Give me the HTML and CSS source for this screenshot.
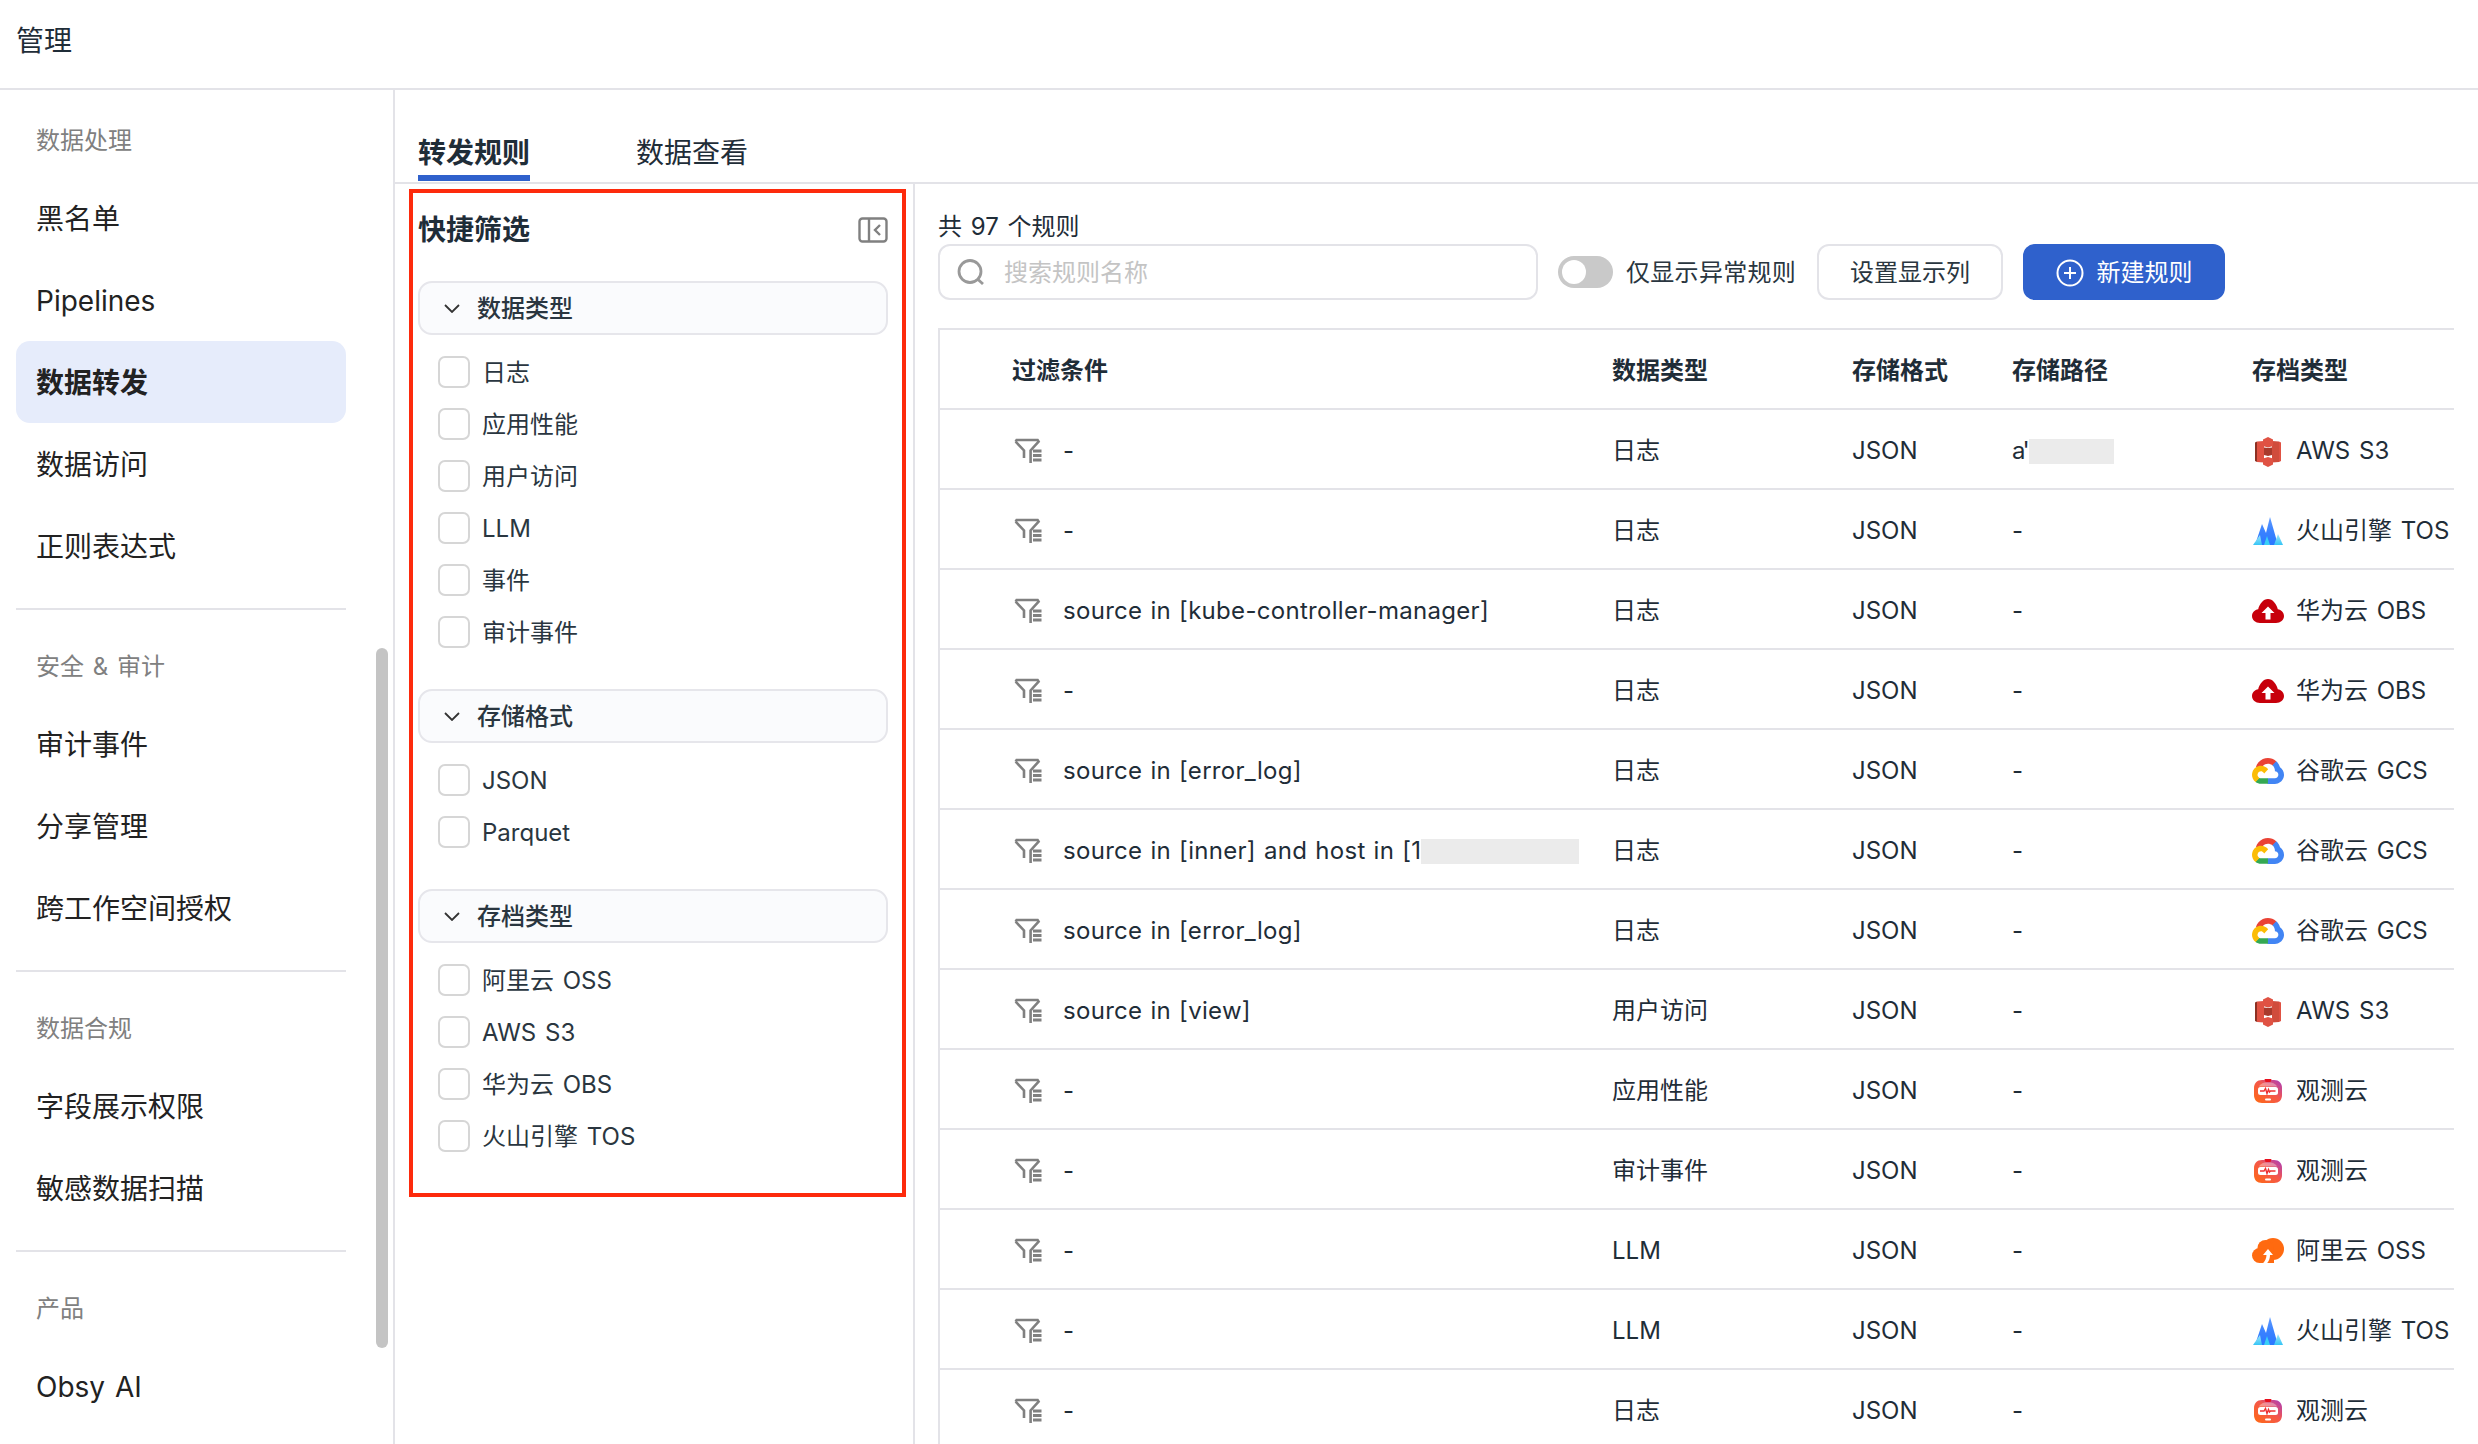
FILE: index.html
```html
<!DOCTYPE html>
<html lang="zh-CN">
<head>
<meta charset="utf-8">
<title>管理</title>
<link rel="stylesheet" href="styles.css">
</head>
<body>
<svg class="defs" aria-hidden="true">
  <defs>
    <linearGradient id="gObs" x1="0" y1="1" x2="1" y2="0">
      <stop offset="0" stop-color="#ff6a13"/><stop offset=".55" stop-color="#f4574b"/><stop offset="1" stop-color="#a83cc0"/>
    </linearGradient>
    <linearGradient id="gVolA" x1="0" y1="0" x2="0" y2="1">
      <stop offset="0" stop-color="#5f9bff"/><stop offset=".5" stop-color="#3a82ff"/><stop offset="1" stop-color="#2b78ff"/>
    </linearGradient>
    <linearGradient id="gVolB" x1="0" y1="0" x2="0" y2="1">
      <stop offset="0" stop-color="#a5e6fb"/><stop offset="1" stop-color="#35c5f5"/>
    </linearGradient>
    <symbol id="i-filter" viewBox="0 0 28 26">
      <path d="M1.600 3.600 2.600 2h21l1 1.600L16.600 12.400V25M1.600 3.600 10 12.400V20" fill="none" stroke="#808080" stroke-width="2.600"/>
      <path d="M19 13h8.500M19 17.500h8.500M19 22h8.500" stroke="#808080" stroke-width="2.800"/>
    </symbol>
    <symbol id="i-aws" viewBox="0 0 32 32">
      <path d="M3 7.500 5 6.500V27L3 26Z" fill="#8c3123"/>
      <path d="M5 6.500 12 6V27.500L5 27Z" fill="#e05243"/>
      <path d="M29 7.500 27 6.500V27L29 26Z" fill="#e05243"/>
      <path d="M27 6.500 20 6V27.500L27 27Z" fill="#d04c3c"/>
      <path d="M16 2 21 4.500V11L16 12.500 11 11V4.500Z" fill="#e05243"/>
      <path d="M12 12.500 16 13 20 12.500V20L16 21 12 20Z" fill="#a83a2c"/>
      <path d="M16 22 21 23.500V29.500L16 32 11 29.500V23.500Z" fill="#e05243"/>
    </symbol>
    <symbol id="i-volc" viewBox="0 0 32 32">
      <path d="M3 30 10 9 14 18 18 2 26 30Z" fill="url(#gVolA)"/>
      <path d="M1 30 8 20 10 30Z" fill="url(#gVolB)"/>
      <path d="M12 30 15 21 18 30Z" fill="#39d0f6"/>
      <path d="M22 30 26 19 31 30Z" fill="url(#gVolB)"/>
    </symbol>
    <symbol id="i-huawei" viewBox="0 0 32 32">
      <path d="M8 28C3.600 28 0 25 0 21c0-3.600 2.800-6.400 6.200-6.800C7.400 9 11.400 4 16 4s8.600 5 9.800 10.200C29.200 14.600 32 17.400 32 21c0 4-3.600 7-8 7z" fill="#c7000b"/>
      <path d="M16 11.500l-6.500 6.500h4v6.500h5V18h4z" fill="#fff"/>
    </symbol>
    <symbol id="i-gcs" viewBox="0 0 2385.700 1919.900">
      <path fill="#ea4335" d="M1513.800 528.700h72.800l207.400-207.400 10.200-88c-385.900-340.600-975-303.900-1315.600 82C393.900 422.500 325.200 550 287.800 688c23.100-9.500 48.700-11 72.800-4.400l414.700-68.400s21.100-34.900 32-32.700c184.500-202.600 495-226.200 708.300-53.800h-1.800z"/>
      <path fill="#4285f4" d="M2089.400 688c-47.700-175.500-145.500-333.300-281.500-454l-291 291c122.900 100.400 192.900 251.700 189.900 410.400v51.700c143.100 0 259 116 259 259 0 143.100-116 259-259 259h-518.100l-51.700 52.400v310.700l51.700 51.700h518.100c297 2.300 560.500-190.200 648.700-473.800 88-283.700-20-591.700-266.500-757.400z"/>
      <path fill="#34a853" d="M669.800 1917.900h518.100v-414.700H669.800c-36.900 0-73.400-7.900-107-23.300l-72.800 22.500-208.800 207.400-18.200 72.800c117.100 88.400 260 136 406.800 135.300z"/>
      <path fill="#fbbc05" d="M669.800 572.500c-287.800 1.700-542.700 186-634.500 458.700-91.800 272.700-.3 573.700 227.800 749.100l300.500-300.500c-130.400-58.900-188.300-212.300-129.400-342.700 58.900-130.400 212.300-188.300 342.700-129.400 57.400 26 103.400 72 129.400 129.400l300.500-300.500c-127.900-167.100-326.600-264.800-537-264.100z"/>
    </symbol>
    <symbol id="i-obs" viewBox="0 0 32 32">
      <path d="M10 5h12c5 0 8 3.500 8 8v7c0 5-3 8-8 8H10c-5 0-8-3-8-8v-7c0-4.500 3-8 8-8z" fill="url(#gObs)"/>
      <path d="M12.500 4h7l-1 3h-5z" fill="#e8101f"/>
      <path d="M13 7.500c-3 .5-5 2-6 4h18c-1-2-3-3.500-6-4z" fill="#fff" opacity=".35"/>
      <rect x="6" y="12" width="20" height="8" rx="2.500" fill="#fff"/>
      <path d="M8 16h4l1.500-2.500 1.500 5 1.500-4 1 2.500 1-1h5" fill="none" stroke="#ee3030" stroke-width="1.400"/>
      <rect x="13" y="23.500" width="6" height="2" rx="1" fill="#fff"/>
    </symbol>
    <symbol id="i-ali" viewBox="0 0 32 32">
      <circle cx="21" cy="14" r="11" fill="#ff6a10"/>
      <circle cx="13.500" cy="13" r="8" fill="#ff6a10"/>
      <circle cx="7.500" cy="20.500" r="7.500" fill="#ff6a10"/>
      <path d="M7.500 18H22V28H7.500Z" fill="#ff6a10"/>
      <path d="M16 14l5 6h-3c0 3-1 6-3 8.200h-4c2-2 3.500-5 3.500-8.200H11z" fill="#fff"/>
    </symbol>
  </defs>
</svg>

<div class="page">
  <header class="top">管理</header>
  <div class="shell">
    <nav class="side">
      <div class="side-label first">数据处理</div>
      <a class="side-item">黑名单</a>
      <a class="side-item">Pipelines</a>
      <a class="side-item active">数据转发</a>
      <a class="side-item">数据访问</a>
      <a class="side-item">正则表达式</a>
      <hr class="side-rule">
      <div class="side-label">安全 &amp; 审计</div>
      <a class="side-item">审计事件</a>
      <a class="side-item">分享管理</a>
      <a class="side-item">跨工作空间授权</a>
      <hr class="side-rule">
      <div class="side-label">数据合规</div>
      <a class="side-item">字段展示权限</a>
      <a class="side-item">敏感数据扫描</a>
      <hr class="side-rule">
      <div class="side-label">产品</div>
      <a class="side-item">Obsy AI</a>
      <div class="side-thumb"></div>
    </nav>

    <main class="main">
      <div class="tabs">
        <div class="tab current">转发规则</div>
        <div class="tab">数据查看</div>
      </div>
      <div class="body">
        <aside class="filters">
          <div class="filters-head">
            <h2 class="filters-title">快捷筛选</h2>
            <svg class="collapse" viewBox="0 0 30 26"><rect x="1.500" y="1.500" width="27" height="23" rx="3" fill="none" stroke="#808080" stroke-width="2.400"/><path d="M11 2v22" stroke="#808080" stroke-width="2.400"/><path d="M22 8l-5 5 5 5" fill="none" stroke="#808080" stroke-width="2.400"/></svg>
          </div>

          <section class="group">
            <div class="group-head"><svg class="chev" viewBox="0 0 16 9"><path d="M1 1l7 7 7-7" fill="none" stroke="#333" stroke-width="1.800"/></svg><span class="nudge">数据类型</span></div>
            <ul class="checks">
              <li class="check"><span class="box"></span><span class="nudge">日志</span></li>
              <li class="check"><span class="box"></span><span class="nudge">应用性能</span></li>
              <li class="check"><span class="box"></span><span class="nudge">用户访问</span></li>
              <li class="check"><span class="box"></span><span class="nudge">LLM</span></li>
              <li class="check"><span class="box"></span><span class="nudge">事件</span></li>
              <li class="check"><span class="box"></span><span class="nudge">审计事件</span></li>
            </ul>
          </section>
          <section class="group">
            <div class="group-head"><svg class="chev" viewBox="0 0 16 9"><path d="M1 1l7 7 7-7" fill="none" stroke="#333" stroke-width="1.800"/></svg><span class="nudge">存储格式</span></div>
            <ul class="checks">
              <li class="check"><span class="box"></span><span class="nudge">JSON</span></li>
              <li class="check"><span class="box"></span><span class="nudge">Parquet</span></li>
            </ul>
          </section>
          <section class="group">
            <div class="group-head"><svg class="chev" viewBox="0 0 16 9"><path d="M1 1l7 7 7-7" fill="none" stroke="#333" stroke-width="1.800"/></svg><span class="nudge">存档类型</span></div>
            <ul class="checks">
              <li class="check"><span class="box"></span><span class="nudge">阿里云 OSS</span></li>
              <li class="check"><span class="box"></span><span class="nudge">AWS S3</span></li>
              <li class="check"><span class="box"></span><span class="nudge">华为云 OBS</span></li>
              <li class="check"><span class="box"></span><span class="nudge">火山引擎 TOS</span></li>
            </ul>
          </section>
          <div class="annotation"></div>
        </aside>

        <section class="content">
          <div class="count">共 97 个规则</div>
          <div class="toolbar">
            <div class="search">
              <svg class="search-icon" viewBox="0 0 30 26"><circle cx="13" cy="12.500" r="11" fill="none" stroke="#999" stroke-width="2.800"/><path d="M21 20.500l5 4.500" stroke="#999" stroke-width="2.800"/></svg>
              <span class="placeholder nudge">搜索规则名称</span>
            </div>
            <div class="toggle"><span class="knob"></span></div>
            <span class="toggle-label nudge">仅显示异常规则</span>
            <button class="btn btn-columns">设置显示列</button>
            <button class="btn btn-new">
              <svg class="plus" viewBox="0 0 28 28"><circle cx="14" cy="14" r="12.500" fill="none" stroke="#fff" stroke-width="2"/><path d="M14 8v12M8 14h12" stroke="#fff" stroke-width="2"/></svg>
              新建规则
            </button>
          </div>

          <div class="table">
            <div class="row head">
              <span></span><span>过滤条件</span><span>数据类型</span><span>存储格式</span><span>存储路径</span><span>存档类型</span>
            </div>
            <div class="row">
              <span></span><span class="cond"><svg class="funnel"><use href="#i-filter"/></svg>-</span><span>日志</span><span>JSON</span><span><span class="path-head">a'</span><i class="mask mask-path"></i></span><span class="store"><svg class="logo"><use href="#i-aws"/></svg>AWS S3</span>
            </div>
            <div class="row">
              <span></span><span class="cond"><svg class="funnel"><use href="#i-filter"/></svg>-</span><span>日志</span><span>JSON</span><span>-</span><span class="store"><svg class="logo"><use href="#i-volc"/></svg>火山引擎 TOS</span>
            </div>
            <div class="row">
              <span></span><span class="cond"><svg class="funnel"><use href="#i-filter"/></svg>source in [kube-controller-manager]</span><span>日志</span><span>JSON</span><span>-</span><span class="store"><svg class="logo"><use href="#i-huawei"/></svg>华为云 OBS</span>
            </div>
            <div class="row">
              <span></span><span class="cond"><svg class="funnel"><use href="#i-filter"/></svg>-</span><span>日志</span><span>JSON</span><span>-</span><span class="store"><svg class="logo"><use href="#i-huawei"/></svg>华为云 OBS</span>
            </div>
            <div class="row">
              <span></span><span class="cond"><svg class="funnel"><use href="#i-filter"/></svg>source in [error_log]</span><span>日志</span><span>JSON</span><span>-</span><span class="store"><svg class="logo"><use href="#i-gcs"/></svg>谷歌云 GCS</span>
            </div>
            <div class="row">
              <span></span><span class="cond"><svg class="funnel"><use href="#i-filter"/></svg><span>source in [inner] and host in [1<i class="mask mask-host"></i></span></span><span>日志</span><span>JSON</span><span>-</span><span class="store"><svg class="logo"><use href="#i-gcs"/></svg>谷歌云 GCS</span>
            </div>
            <div class="row">
              <span></span><span class="cond"><svg class="funnel"><use href="#i-filter"/></svg>source in [error_log]</span><span>日志</span><span>JSON</span><span>-</span><span class="store"><svg class="logo"><use href="#i-gcs"/></svg>谷歌云 GCS</span>
            </div>
            <div class="row">
              <span></span><span class="cond"><svg class="funnel"><use href="#i-filter"/></svg>source in [view]</span><span>用户访问</span><span>JSON</span><span>-</span><span class="store"><svg class="logo"><use href="#i-aws"/></svg>AWS S3</span>
            </div>
            <div class="row">
              <span></span><span class="cond"><svg class="funnel"><use href="#i-filter"/></svg>-</span><span>应用性能</span><span>JSON</span><span>-</span><span class="store"><svg class="logo"><use href="#i-obs"/></svg>观测云</span>
            </div>
            <div class="row">
              <span></span><span class="cond"><svg class="funnel"><use href="#i-filter"/></svg>-</span><span>审计事件</span><span>JSON</span><span>-</span><span class="store"><svg class="logo"><use href="#i-obs"/></svg>观测云</span>
            </div>
            <div class="row">
              <span></span><span class="cond"><svg class="funnel"><use href="#i-filter"/></svg>-</span><span>LLM</span><span>JSON</span><span>-</span><span class="store"><svg class="logo"><use href="#i-ali"/></svg>阿里云 OSS</span>
            </div>
            <div class="row">
              <span></span><span class="cond"><svg class="funnel"><use href="#i-filter"/></svg>-</span><span>LLM</span><span>JSON</span><span>-</span><span class="store"><svg class="logo"><use href="#i-volc"/></svg>火山引擎 TOS</span>
            </div>
            <div class="row">
              <span></span><span class="cond"><svg class="funnel"><use href="#i-filter"/></svg>-</span><span>日志</span><span>JSON</span><span>-</span><span class="store"><svg class="logo"><use href="#i-obs"/></svg>观测云</span>
            </div>
          </div>
        </section>
      </div>
    </main>
  </div>
</div>
</body>
</html>
```
FILE: styles.css
```css
* { box-sizing: border-box; }
html, body { margin: 0; height: 100%; overflow: hidden; background: #fff; }
body {
  font-family: Inter, "Noto Sans CJK SC", sans-serif;
  font-size: 24px;
  line-height: 34px;
  word-spacing: 2px;
  color: #1f2d38;
}
.defs { position: absolute; width: 0; height: 0; }
.page { height: 1444px; display: flex; flex-direction: column; overflow: hidden; }
.nudge { padding-top: 2px; }

.top {
  height: 90px;
  flex: none;
  padding: 24px 0 0 16px;
  font-size: 28px;
  border-bottom: 2px solid #e3e3e8;
}
.shell { flex: 1; display: flex; min-height: 0; }

/* sidebar */
.side {
  position: relative;
  width: 395px;
  flex: none;
  padding: 0 47px 0 16px;
  border-right: 2px solid #e3e3e8;
  overflow: hidden;
}
.side-label {
  margin: 38px 0 19px;
  padding: 2px 0 0 20px;
  height: 36px;
  color: #808080;
}
.side-label.first { margin-top: 32px; }
.side-item {
  display: flex;
  align-items: center;
  height: 82px;
  padding: 2px 0 0 20px;
  font-size: 28px;
  color: #222;
  border-radius: 14px;
}
.side-item.active { background: #e6ecfb; font-weight: 600; }
.side-rule { margin: 21px 0 0; height: 2px; border: 0; background: #e3e3e8; }
.side-thumb {
  position: absolute;
  left: 376px;
  top: 558px;
  width: 12px;
  height: 700px;
  border-radius: 6px;
  background: #c4c4c4;
}

/* tabs */
.main { flex: 1; min-width: 0; display: flex; flex-direction: column; }
.tabs {
  height: 94px;
  flex: none;
  display: flex;
  align-items: flex-end;
  gap: 106px;
  padding: 0 0 1px 23px;
  border-bottom: 2px solid #e3e3e8;
}
.tab {
  padding-bottom: 5px;
  border-bottom: 6px solid transparent;
  font-size: 28px;
  width: 112px;
  white-space: nowrap;
}
.tab.current { font-weight: 600; border-bottom-color: #2f61cc; }
.body { flex: 1; display: flex; min-height: 0; }

/* filter panel */
.filters {
  position: relative;
  width: 520px;
  flex: none;
  padding: 29px 25px 0 23px;
  border-right: 2px solid #e3e3e8;
}
.filters-head {
  display: flex;
  justify-content: space-between;
  align-items: center;
  margin-bottom: 34px;
}
.filters-title { margin: 0; font-size: 28px; line-height: 34px; font-weight: 600; }
.collapse { width: 30px; height: 26px; display: block; }
.group { margin-bottom: 31px; }
.group-head {
  display: flex;
  align-items: center;
  gap: 17px;
  height: 54px;
  padding-left: 24px;
  background: #fafbfd;
  border: 2px solid #e6e6eb;
  border-radius: 14px;
  font-weight: 500;
  color: #2a3640;
}
.chev { width: 16px; height: 9px; flex: none; }
.checks { list-style: none; margin: 11px 0 0; padding: 0 0 0 20px; }
.check {
  display: flex;
  align-items: center;
  gap: 12px;
  height: 52px;
  color: #2a3640;
}
.box {
  width: 32px;
  height: 32px;
  flex: none;
  border: 2px solid #d6d6d6;
  border-radius: 7px;
  background: #fff;
}
.annotation {
  position: absolute;
  left: 14px;
  top: 5px;
  width: 497px;
  height: 1008px;
  border: 4px solid #fd2a0c;
  pointer-events: none;
}

/* content */
.content { flex: 1; min-width: 0; padding: 26px 24px 0 23px; overflow: hidden; }
.count { height: 34px; }
.toolbar { display: flex; align-items: center; height: 56px; margin-bottom: 28px; }
.search {
  display: flex;
  align-items: center;
  gap: 17px;
  width: 600px;
  height: 56px;
  padding-left: 17px;
  border: 2px solid #e3e3e8;
  border-radius: 12px;
}
.search-icon { width: 30px; height: 26px; flex: none; }
.placeholder { color: #c4c4c4; }
.toggle {
  width: 55px;
  height: 32px;
  margin: 0 13px 0 20px;
  padding: 4px;
  flex: none;
  border-radius: 16px;
  background: #c9c9c9;
}
.knob { display: block; width: 24px; height: 24px; border-radius: 50%; background: #fff; }
.toggle-label { width: 168px; flex: none; white-space: nowrap; letter-spacing: .3px; color: #2a3640; }
.btn {
  display: flex;
  align-items: center;
  justify-content: center;
  height: 56px;
  padding: 1px 0 0;
  font: inherit;
  word-spacing: inherit;
  border-radius: 12px;
  flex: none;
}
.btn-columns {
  width: 186px;
  margin: 0 20px 0 23px;
  background: #fff;
  border: 2px solid #e3e3e8;
  color: #2a3640;
}
.btn-new {
  width: 202px;
  gap: 13px;
  background: #2f61cc;
  border: 0;
  color: #fff;
}
.plus { width: 28px; height: 28px; }

/* table */
.table {
  width: 1516px;
  border-top: 2px solid #e3e3e8;
  border-left: 2px solid #e3e3e8;
}
.row {
  display: grid;
  grid-template-columns: 72px 600px 240px 160px 240px 1fr;
  align-items: center;
  height: 80px;
  padding-top: 3px;
  border-bottom: 2px solid #e3e3e8;
  white-space: nowrap;
  color: #1f2d38;
}
.row.head { font-weight: 600; }
.cond { display: flex; align-items: center; gap: 21px; padding-left: 2px; letter-spacing: .3px; word-spacing: 1px; }
.funnel { width: 28px; height: 26px; flex: none; }
.store { display: flex; align-items: center; gap: 12px; }
.logo { width: 32px; height: 32px; flex: none; }
.path-head { letter-spacing: -3px; }
.mask { display: inline-block; vertical-align: middle; height: 25px; background: #ebebeb; }
.mask-path { width: 85px; margin-left: 2px; }
.mask-host { width: 158px; }
```
